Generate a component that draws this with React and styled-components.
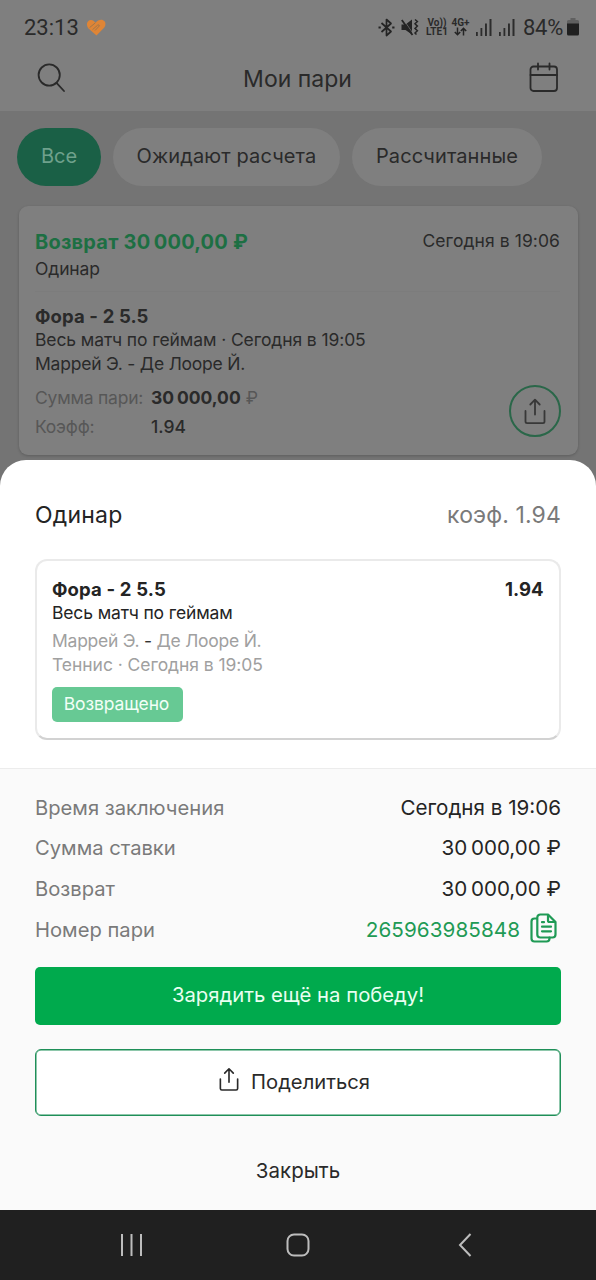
import React from "react";
import styled, { createGlobalStyle, css } from "styled-components";

const GlobalStyle = createGlobalStyle`
  * { box-sizing: border-box; }
  body { margin: 0; background: #747474; }
  button { font: inherit; border: 0; padding: 0; background: none; cursor: pointer; }
  svg { display: block; flex: none; }
`;

const type = css`
  font-size: ${(p) => p.$size}px;
  letter-spacing: ${(p) => p.$track || 0}px;
`;

const Screen = styled.div`
  width: 596px;
  height: 1280px;
  display: flex;
  flex-direction: column;
  overflow: hidden;
  background: #747474;
  color: #2a2a2a;
  font-family: Inter, "Liberation Sans", sans-serif;
  white-space: nowrap;
`;

/* Top of the app */
const TopBar = styled.header`
  height: 111px;
  flex: none;
  background: #7f7f7f;
`;

const StatusBar = styled.div`
  height: 53px;
  padding: 1px 17px 0 24px;
  display: flex;
  align-items: center;
  font-family: Roboto, sans-serif;
  font-size: 22px;
  color: #2a2a2a;
`;

const Clock = styled.span`
  width: 62px;
`;

const StatusIcons = styled.div`
  margin-left: auto;
  display: flex;
  align-items: center;
`;

const NetworkLabel = styled.span`
  display: flex;
  flex-direction: column;
  align-items: center;
  width: ${(p) => p.$width}px;
  margin-right: ${(p) => p.$gap}px;
  font-size: 10px;
  font-weight: 700;
  line-height: 9px;
`;

const BatteryText = styled.span`
  width: 44px;
  margin-left: 8px;
  letter-spacing: -0.3px;
`;

const TitleBar = styled.div`
  height: 51px;
  padding: 0 37px;
  display: flex;
  align-items: center;
  justify-content: space-between;

  svg {
    margin-bottom: 2px;
  }
`;

const PageTitle = styled.h1`
  margin: 0;
  ${type}
  font-weight: 400;
  line-height: 28px;
`;

/* Filter chips */
const Chips = styled.nav`
  display: flex;
  gap: 12px;
  padding: 17px 17px 0;
`;

const Chip = styled.button`
  width: ${(p) => p.$width}px;
  height: 58px;
  flex: none;
  border-radius: 29px;
  text-align: center;
  ${type}
  line-height: 56px;
  padding-bottom: 2px;
  background: ${(p) => (p.$active ? "#1a6046" : "#7f7f7f")};
  color: ${(p) => (p.$active ? "#6fa18c" : "#2a2a2a")};
`;

/* Bet card behind the sheet */
const BetCard = styled.article`
  height: 249px;
  margin: 20px 18.5px 0 18.5px;
  padding: 24px 17.5px 0 16.5px;
  border-radius: 9px;
  background: #7f7f7f;
  box-shadow: 0 1px 3px rgba(0, 0, 0, 0.2);
  font-size: 17.5px;
  line-height: 24px;
`;

const BetHead = styled.div`
  display: flex;
  justify-content: space-between;
  height: 62px;
  border-bottom: 1px solid #7c7c7c;
`;

const Refund = styled.div`
  ${type}
  font-weight: 700;
  color: #1d6f43;
  margin-bottom: 3px;
`;

const Line = styled.div`
  ${type}
`;

const BetDate = styled.div`
  ${type}
  line-height: 21px;
`;

const Event = styled.div`
  padding-top: 12.5px;
  line-height: 23.5px;
`;

const EventName = styled.div`
  ${type}
  font-weight: 700;
`;

const BetFoot = styled.div`
  display: flex;
  justify-content: space-between;
  padding-top: 10px;
`;

const Sums = styled.div`
  display: grid;
  grid-template-columns: 116px auto;
  grid-auto-rows: 24px;
  row-gap: 5px;
  padding-top: 0.5px;
`;

const Muted = styled.span`
  ${type}
  color: #575757;
`;

const Amount = styled.span`
  ${type}
  font-weight: ${(p) => p.$weight};
`;

const RoundButton = styled.button`
  width: 52px;
  height: 52px;
  margin: 0 -0.5px 0 0;
  border: 2px solid #2a6749;
  border-radius: 50%;
  display: flex;
  align-items: center;
  justify-content: center;
  color: #383838;
`;

/* Bottom sheet */
const Sheet = styled.section`
  flex: none;
  height: 750px;
  margin-top: 5px;
  border-radius: 26px 26px 0 0;
  overflow: hidden;
  background: #fff;
  color: #242424;
`;

const SheetTop = styled.div`
  height: 309px;
  padding: 40.5px 35px 0;
  border-bottom: 1px solid #ececec;
`;

const SheetHead = styled.div`
  display: flex;
  justify-content: space-between;
  height: 58.5px;
  line-height: 28px;
`;

const SheetTitle = styled.h2`
  margin: 0;
  ${type}
  font-weight: 400;
`;

const SheetOdds = styled.span`
  ${type}
  color: #7a7a7a;
`;

const LegCard = styled.div`
  height: 181px;
  padding: 16px 15.5px 0 15px;
  border: 2px solid #eaeaea;
  border-bottom-color: #d2d2d2;
  border-radius: 12px;
  line-height: 24px;
`;

const LegHead = styled.div`
  display: flex;
  justify-content: space-between;
`;

const LegInfo = styled.div`
  padding-top: 4px;
  color: #a0a0a0;
`;

const Dash = styled.span`
  color: #333;
`;

const Badge = styled.span`
  display: flex;
  align-items: center;
  justify-content: center;
  width: 131px;
  height: 35px;
  margin-top: 10px;
  padding: 0 2px 1px 0;
  border-radius: 5px;
  background: #67c994;
  color: #f2fff7;
  ${type}
`;

const SheetBody = styled.div`
  height: 441px;
  padding: 18px 35px 0;
  background: #fafafa;
  display: flex;
  flex-direction: column;
`;

const Row = styled.div`
  display: flex;
  align-items: center;
  justify-content: space-between;
  height: 40.6px;
`;

const RowLabel = styled.span`
  ${type}
  color: #7a7a7a;
`;

const RowValue = styled.span`
  ${type}
  display: flex;
  align-items: center;
  color: ${(p) => (p.$link ? "#1f9a55" : "#242424")};
`;

const CopyButton = styled.button`
  margin: -3px 4px 0 10px;
  color: #1f9a55;
`;

const PrimaryButton = styled.button`
  height: 58px;
  margin-top: 17.5px;
  flex: none;
  border-radius: 5px;
  background: #00aa4d;
  color: #e9fff1;
  ${type}
  padding-bottom: 2px;
`;

const OutlineButton = styled.button`
  height: 67px;
  margin-top: 24.5px;
  flex: none;
  display: flex;
  align-items: center;
  justify-content: center;
  gap: 12px;
  border: 1px solid #1f8f58;
  box-shadow: inset 0 0 0 0.5px #1f8f58;
  border-radius: 6px;
  background: #fff;
  color: #2a2a2a;
  padding: 0 7px 3px 0;
  ${type}

  svg {
    margin-bottom: 3px;
  }
`;

const CloseButton = styled.button`
  height: 40px;
  margin-top: 34px;
  color: #2a2a2a;
  ${type}
`;

/* System navigation */
const SystemNav = styled.footer`
  flex: 1;
  display: grid;
  grid-template-columns: 166px 172px auto;
  align-items: center;
  padding-left: 120px;
  background: #202020;
  color: #bdbdbd;
`;

const ShareIcon = ({ width = 22, height = 27 }) => (
  <svg width={width} height={height} viewBox="0 0 22 27" fill="none" stroke="currentColor" strokeWidth="1.8" strokeLinecap="round" strokeLinejoin="round">
    <path d="M1.5 13v10.500a1.600 1.600 0 0 0 1.600 1.600h15.800a1.600 1.600 0 0 0 1.600-1.600V13M11 16.500V2M6.300 6.500 11 1.700l4.700 4.800" />
  </svg>
);

const SearchIcon = () => (
  <svg width="29" height="30" viewBox="0 0 29 30" fill="none" stroke="#2a2a2a" strokeWidth="1.8" strokeLinecap="round">
    <circle cx="12.200" cy="12" r="10.600" />
    <path d="M19.500 19.800 27 28" />
  </svg>
);

const CalendarIcon = () => (
  <svg width="30" height="31" viewBox="0 0 30 31" fill="none" stroke="#2a2a2a" strokeWidth="1.8" strokeLinecap="round">
    <rect x="1.500" y="4.500" width="26.500" height="24.500" rx="3" />
    <path d="M1.500 13h26.500M9 1.500v6M20.500 1.500v6" />
  </svg>
);

const HeartIcon = () => (
  <svg width="20" height="17" viewBox="0 0 20 17">
    <path d="M10.500 16.500 2.500 9.500C.2 6.800.4 2.400 3.500 1.200 6 .3 8 1.600 9.500 3.800 11.500 1.600 14 .2 16.600 1c3.200 1.100 3.700 4.800 1.700 7.400Z" fill="#df8536" />
    <path d="M3.600 8.600 9.300 3.900M6.500 10.700 11.600 6.200q1.600-1 1.800.7L9 11.500" stroke="#a2774a" strokeWidth="1" fill="none" />
  </svg>
);

const BluetoothIcon = () => (
  <svg width="17" height="19" viewBox="0 0 17 19" fill="none" stroke="#242424" strokeWidth="1.700" strokeLinejoin="round">
    <path d="m3.500 5 9.500 8.500-4.500 4V1.500l4.500 4L3.500 14" />
    <path d="M.5 9.500h2.300M14.200 9.500h2.300" strokeWidth="2" />
  </svg>
);

const MuteIcon = styled(({ className }) => (
  <svg className={className} width="18" height="18" viewBox="0 0 18 18" fill="#242424">
    <path d="M.5 6.500h4L11 1.500v15L4.500 12h-4Z" />
    <path d="M2 .8 13 17" stroke="#7f7f7f" strokeWidth=".7" />
    <path d="M.8 2 11.500 17" stroke="#242424" strokeWidth="1.800" />
    <path d="m14 1.500 2.400 2-2.400 2.300 2.400 2.300L14 10.400l2.400 2.300-2.400 2.300 1.500 1.500" fill="none" stroke="#242424" strokeWidth="1.500" />
  </svg>
))`
  margin: 0 7px 0 6px;
`;

const ArrowsIcon = () => (
  <svg width="13" height="9" viewBox="0 0 13 9" fill="none" stroke="#242424" strokeWidth="1.500">
    <path d="M3.500.5v7M.8 5l2.700 2.700L6.200 5M9.500 8.500v-7M6.800 4l2.700-2.700L12.200 4" />
  </svg>
);

const SignalIcon = styled(({ className }) => (
  <svg className={className} width="16" height="17" viewBox="0 0 16 17" fill="#2c2c2c">
    <path d="M0 13h1.800v4H0zM4.500 9h1.800v8H4.500zM9 4.500h1.900V17H9zM13.500 0h2v17h-2z" />
  </svg>
))`
  margin-left: 7px;
`;

const BatteryIcon = () => (
  <svg width="12" height="18" viewBox="0 0 12 18">
    <path d="M3.500 0h5v2h2a1.500 1.500 0 0 1 1.500 1.500V6H0V3.500A1.500 1.500 0 0 1 1.500 2h2Z" fill="#606060" />
    <path d="M0 5.500h12V16a1.500 1.500 0 0 1-1.500 1.500h-9A1.500 1.500 0 0 1 0 16Z" fill="#202020" />
  </svg>
);

const CopyIcon = () => (
  <svg width="27" height="30" viewBox="0 0 27 30" fill="none" stroke="currentColor" strokeWidth="2.2" strokeLinecap="round" strokeLinejoin="round">
    <path d="M7 5.500H4.500A3 3 0 0 0 1.500 8.500v17a3 3 0 0 0 3 3h12a3 3 0 0 0 3-3v-.8" />
    <path d="M18 1.500h-7.700a3 3 0 0 0-3 3v17a3 3 0 0 0 3 3h12.200a3 3 0 0 0 3-3V9Z" />
    <path d="M18 2v5.500a1.500 1.500 0 0 0 1.500 1.500H25M12 9.200h2M12 13.700h9M12 18.300h9" />
  </svg>
);

const details = [
  { label: "Время заключения", value: "Сегодня в 19:06" },
  { label: "Сумма ставки", value: "30\u2009000,00 ₽" },
  { label: "Возврат", value: "30\u2009000,00 ₽" },
];

export default function App() {
  return (
    <Screen>
      <GlobalStyle />
      <TopBar>
        <StatusBar>
          <Clock>23:13</Clock>
          <HeartIcon />
          <StatusIcons>
            <BluetoothIcon />
            <MuteIcon />
            <NetworkLabel $width={22} $gap={4}>
              <span>Vo))</span>
              <span>LTE1</span>
            </NetworkLabel>
            <NetworkLabel $width={17} $gap={0}>
              <span>4G+</span>
              <ArrowsIcon />
            </NetworkLabel>
            <SignalIcon />
            <SignalIcon />
            <BatteryText>84%</BatteryText>
            <BatteryIcon />
          </StatusIcons>
        </StatusBar>
        <TitleBar>
          <SearchIcon />
          <PageTitle $size={23}>Мои пари</PageTitle>
          <CalendarIcon />
        </TitleBar>
      </TopBar>

      <Chips>
        <Chip $width={84} $size={20} $active>Все</Chip>
        <Chip $width={227} $size={20} $track={0.12}>Ожидают расчета</Chip>
        <Chip $width={190} $size={20} $track={0.08}>Рассчитанные</Chip>
      </Chips>

      <BetCard>
        <BetHead>
          <div>
            <Refund $size={20} $track={0.22}>Возврат 30{"\u2009"}000,00 ₽</Refund>
            <Line $size={17.5} $track={-0.12}>Одинар</Line>
          </div>
          <BetDate $size={17.5} $track={0.07}>Сегодня в 19:06</BetDate>
        </BetHead>
        <Event>
          <EventName $size={18.5} $track={0.12}>Фора - 2 5.5</EventName>
          <Line $size={17.5} $track={-0.1}>Весь матч по геймам · Сегодня в 19:05</Line>
          <Line $size={17.5} $track={-0.22}>Маррей Э. - Де Лооре Й.</Line>
        </Event>
        <BetFoot>
          <Sums>
            <Muted $size={17.5} $track={-0.22}>Сумма пари:</Muted>
            <span>
              <Amount $size={17.5} $weight={700}>30{"\u2009"}000,00</Amount> <Muted $size={17.5}>₽</Muted>
            </span>
            <Muted $size={17.5} $track={-0.22}>Коэфф:</Muted>
            <Amount $size={17.5} $weight={500}>1.94</Amount>
          </Sums>
          <RoundButton aria-label="Поделиться">
            <ShareIcon />
          </RoundButton>
        </BetFoot>
      </BetCard>

      <Sheet>
        <SheetTop>
          <SheetHead>
            <SheetTitle $size={23} $track={0.2}>Одинар</SheetTitle>
            <SheetOdds $size={23} $track={0.13}>коэф. 1.94</SheetOdds>
          </SheetHead>
          <LegCard>
            <LegHead>
              <EventName $size={18.5} $track={0.15}>Фора - 2 5.5</EventName>
              <EventName $size={18.5}>1.94</EventName>
            </LegHead>
            <Line $size={17.5} $track={-0.14}>Весь матч по геймам</Line>
            <LegInfo>
              <Line $size={17.5} $track={-0.25}>Маррей Э. <Dash>-</Dash> Де Лооре Й.</Line>
              <Line $size={17.5} $track={-0.06}>Теннис · Сегодня в 19:05</Line>
            </LegInfo>
            <Badge $size={17.5} $track={-0.12}>Возвращено</Badge>
          </LegCard>
        </SheetTop>
        <SheetBody>
          {details.map((d) => (
            <Row key={d.label}>
              <RowLabel $size={20.2}>{d.label}</RowLabel>
              <RowValue $size={20.6}>{d.value}</RowValue>
            </Row>
          ))}
          <Row>
            <RowLabel $size={20.2}>Номер пари</RowLabel>
            <RowValue $size={20.7} $track={0.05} $link>
              265963985848
              <CopyButton aria-label="Скопировать"><CopyIcon /></CopyButton>
            </RowValue>
          </Row>
          <PrimaryButton $size={20.3}>Зарядить ещё на победу!</PrimaryButton>
          <OutlineButton $size={20.2}>
            <ShareIcon width={20} height={25} />
            Поделиться
          </OutlineButton>
          <CloseButton $size={20.5}>Закрыть</CloseButton>
        </SheetBody>
      </Sheet>

      <SystemNav>
        <svg width="23" height="24" viewBox="0 0 23 24" stroke="currentColor" strokeWidth="2">
          <path d="M2 1v22M11.500 1v22M21 1v22" />
        </svg>
        <svg width="24" height="24" viewBox="0 0 24 24" fill="none" stroke="currentColor" strokeWidth="2">
          <rect x="1.500" y="1.500" width="21" height="21" rx="6.500" />
        </svg>
        <svg width="14" height="24" viewBox="0 0 14 24" fill="none" stroke="currentColor" strokeWidth="2">
          <path d="M12.500 1 2 12l10.500 11" />
        </svg>
      </SystemNav>
    </Screen>
  );
}
